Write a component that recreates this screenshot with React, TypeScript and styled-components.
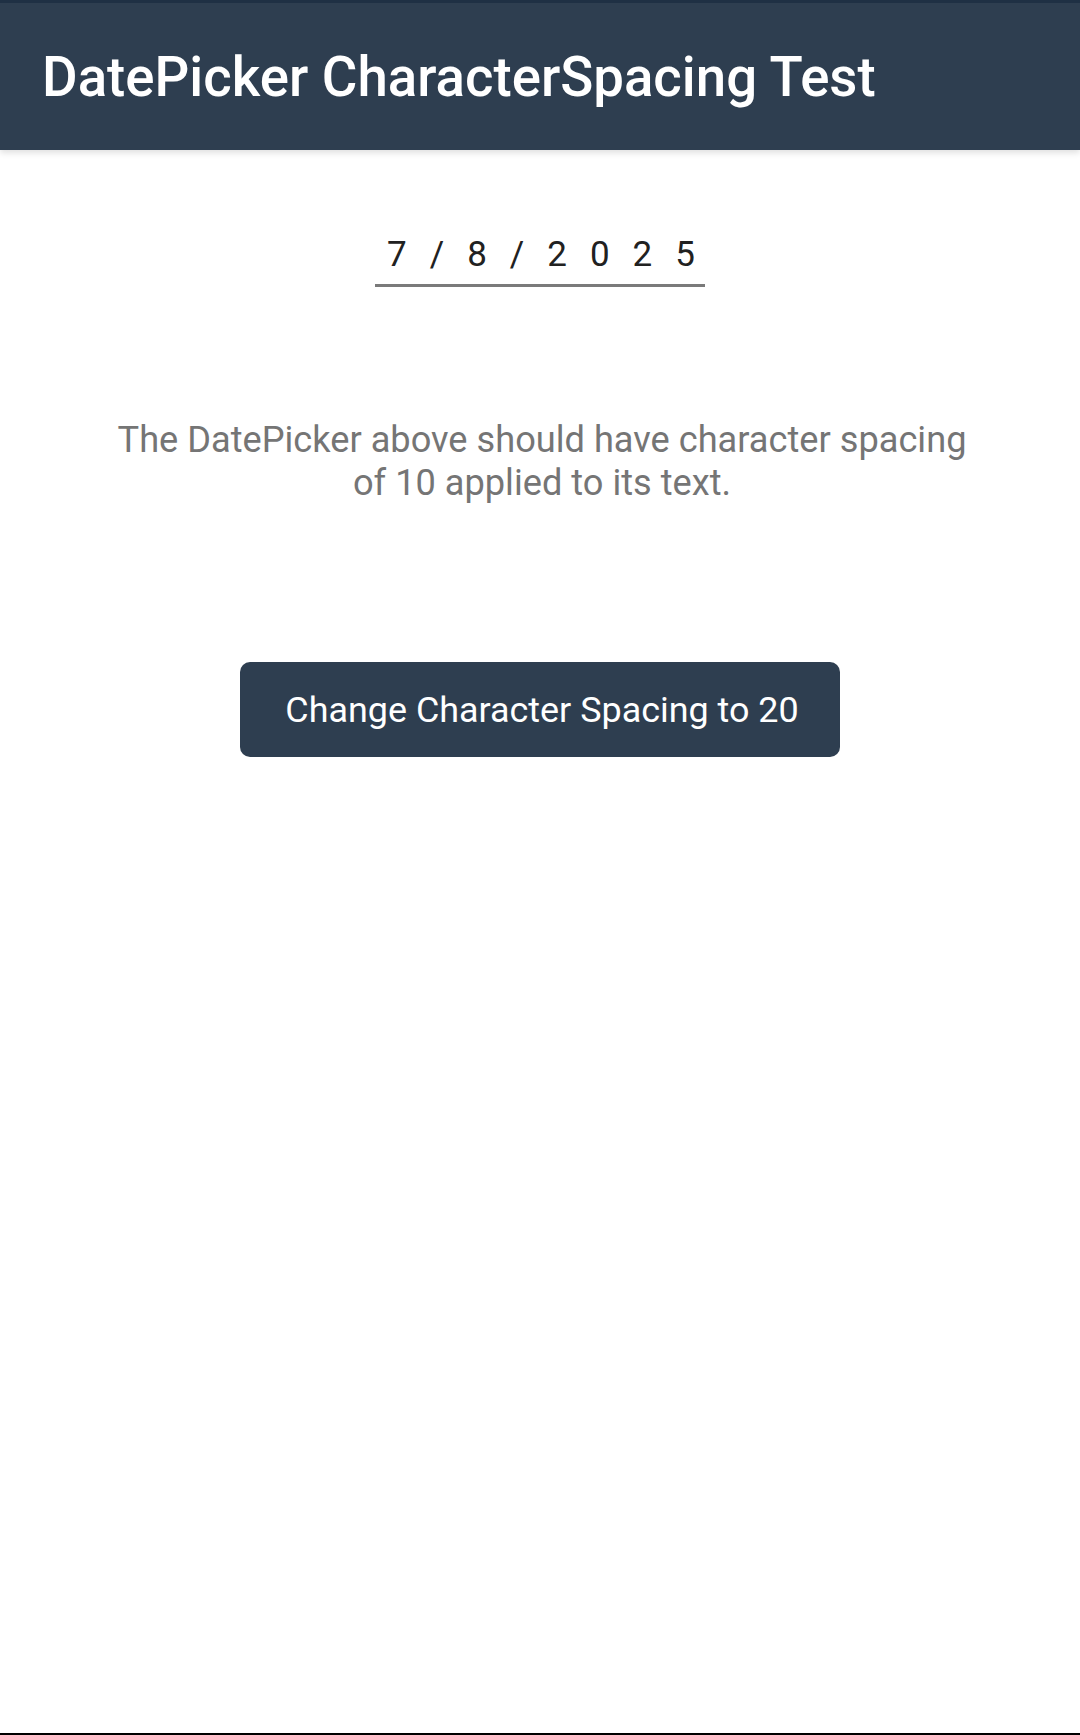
import React from "react";
import styled, { createGlobalStyle } from "styled-components";

const Global = createGlobalStyle`
  html, body { margin: 0; padding: 0; background: #ffffff; }
  body { font-family: Roboto, "Noto Sans", sans-serif; }
`;

const Screen = styled.div`
  width: 1080px;
  height: 1735px;
  display: flex;
  flex-direction: column;
  background: #ffffff;
  border-bottom: 2px solid #000000;
  box-sizing: border-box;
  overflow: hidden;
`;

const Toolbar = styled.header`
  height: 150px;
  box-sizing: border-box;
  border-top: 3px solid #1f3044;
  background: #2e3e50;
  display: flex;
  align-items: center;
  padding: 0 42px;
  box-shadow: 0 3px 6px rgba(0, 0, 0, 0.12);
  position: relative;
  z-index: 1;
`;

const Title = styled.h1`
  margin: 0;
  color: #ffffff;
  font-family: Roboto, sans-serif;
  font-weight: 500;
  font-size: 54.6px;
  letter-spacing: 0;
`;

const Content = styled.main`
  display: flex;
  flex-direction: column;
  align-items: center;
  padding-top: 76px;
`;

const DateField = styled.div`
  display: flex;
  flex-direction: column;
  align-items: center;
  width: 330px;
`;

const DateText = styled.div`
  font-family: Roboto, sans-serif;
  font-size: 35px;
  line-height: 58px;
  letter-spacing: 23px;
  margin-right: -23px;
  color: #212121;
  padding-left: 2px;
`;

const Underline = styled.div`
  width: 330px;
  height: 3px;
  background: #7a7a7a;
`;

const Description = styled.p`
  margin: 131px 0 0;
  width: 880px;
  padding-left: 4px;
  text-align: center;
  font-family: Roboto, sans-serif;
  font-size: 36.2px;
  line-height: 43px;
  color: #757575;
`;

const ActionButton = styled.button`
  margin-top: 158px;
  width: 600px;
  height: 95px;
  border: none;
  border-radius: 10px;
  background: #2e3e50;
  color: #ffffff;
  font-family: Roboto, sans-serif;
  font-size: 35.9px;
  display: flex;
  align-items: center;
  justify-content: center;
  padding: 0 0 0 4px;
`;

export default function App() {
  return (
    <>
      <Global />
      <Screen>
        <Toolbar>
          <Title>DatePicker CharacterSpacing Test</Title>
        </Toolbar>
        <Content>
          <DateField>
            <DateText>7/8/2025</DateText>
            <Underline />
          </DateField>
          <Description>
            The DatePicker above should have character spacing of 10 applied to its text.
          </Description>
          <ActionButton>Change Character Spacing to 20</ActionButton>
        </Content>
      </Screen>
    </>
  );
}
